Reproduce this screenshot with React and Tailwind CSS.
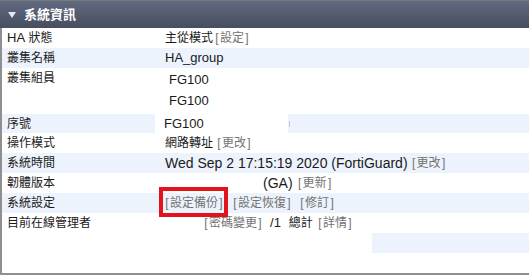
import React from 'react';

const L = ({ children, className = '' }) => (
  <span className={`text-[13px] ${className}`}>{children}</span>
);

// brackets in the reference are half-width cells, wider than the Latin glyphs
const Link = ({ children, className = '' }) => (
  <span className={`text-[#737373] whitespace-nowrap ${className}`}>
    <span className="inline-block w-[6px] text-center">[</span>
    {children}
    <span className="inline-block w-[6px] text-center">]</span>
  </span>
);

const Row = ({ label, blue = false, className = 'h-[20px] items-center', children }) => (
  <div className={`flex ${blue ? 'bg-[#edf3fc]' : 'bg-white'} ${className}`}>
    <div className="w-[153px] shrink-0 pl-[5px] leading-[20px]">{label}</div>
    <div className="flex-1 flex items-center h-full">{children}</div>
  </div>
);

export default function App() {
  return (
    <div className="relative w-[529px] h-[275px] bg-white text-[12px] text-[#1a1a1a] font-['Liberation_Sans','Noto_Sans_CJK_TC',sans-serif]">
      <div className="h-[28px] flex items-center border-t border-[#7a7a7a] bg-gradient-to-b from-[#606981] to-[#474e5e]">
        <svg width="8" height="6" viewBox="0 0 8 6" className="ml-[8px] mr-[8px]">
          <path d="M0 0 L8 0 L4 6 Z" fill="#e6e8ee" />
        </svg>
        <span className="text-white font-bold text-[13px]">系統資訊</span>
      </div>

      <div className="h-[247px] border-l-2 border-b-2 border-[#8f8f8f]">
        <Row label={<><L>HA</L> 狀態</>}>
          <span className="pl-[10px]">主從模式</span>
          <Link className="ml-[1px]">設定</Link>
        </Row>
        <Row label="叢集名稱" blue>
          <L className="pl-[10px]">HA_group</L>
        </Row>
        <Row label="叢集組員" className="h-[46px] items-start">
          <div className="pl-[14px] pt-[1px] flex flex-col self-start">
            <L className="leading-[21px]">FG100</L>
            <L className="leading-[21px]">FG100</L>
          </div>
        </Row>
        <Row label="序號" blue className="h-[19px] items-center">
          <div className="w-[133px] h-full bg-white flex items-center pl-[9px]">
            <L>FG100</L>
          </div>
          <div className="w-[1px] h-[6px] bg-[#c8c8c8] ml-[1px]" />
        </Row>
        <Row label="操作模式">
          <span className="pl-[10px]">網路轉址</span>
          <Link className="ml-[3px]">更改</Link>
        </Row>
        <Row label="系統時間" blue>
          <span className="pl-[10px] text-[14px]">Wed Sep 2 17:15:19 2020 (FortiGuard)</span>
          <Link className="ml-[3px]">更改</Link>
        </Row>
        <Row label="韌體版本">
          <span className="pl-[108px] text-[14px]">(GA)</span>
          <Link className="ml-[4px]">更新</Link>
        </Row>
        <Row label="系統設定" blue>
          <Link className="ml-[9px]">設定備份</Link>
          <Link className="ml-[8px]">設定恢復</Link>
          <Link className="ml-[7px]">修訂</Link>
        </Row>
        <Row label="目前在線管理者">
          <Link className="ml-[48px]">密碼變更</Link>
          <L className="ml-[7px]">/1</L>
          <span className="ml-[8px]">總計</span>
          <Link className="ml-[4px]">詳情</Link>
        </Row>
        <div className="h-[20px] flex bg-[#edf3fc]">
          <div className="w-[370px] bg-white" />
        </div>
      </div>

      <div className="absolute left-[159px] top-[187px] w-[69px] h-[30px] border-[4px] border-[#e3131b]" />
    </div>
  );
}
